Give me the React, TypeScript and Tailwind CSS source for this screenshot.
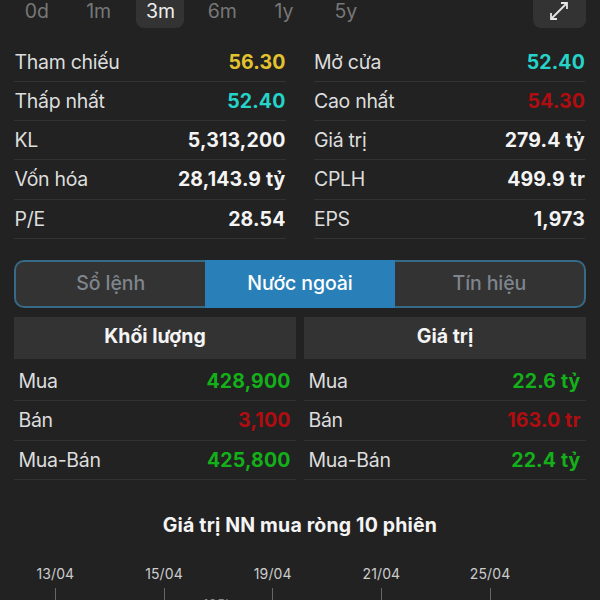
import React from 'react';

type Tone = 'plain' | 'ref' | 'floor' | 'up' | 'down';

interface Stat {
  label: string;
  value: string;
  tone?: Tone;
}

const TONES: Record<Tone, string> = {
  plain: 'text-[#f4f4f4]',
  ref: 'text-[#e3c22f]',
  floor: 'text-[#25d3c9]',
  up: 'text-[#13b01a]',
  down: 'text-[#b00d10]',
};

const RANGES = ['0d', '1m', '3m', '6m', '1y', '5y'];

const TABS = ['Sổ lệnh', 'Nước ngoài', 'Tín hiệu'];

const LEFT_STATS: Stat[] = [
  { label: 'Tham chiếu', value: '56.30', tone: 'ref' },
  { label: 'Thấp nhất', value: '52.40', tone: 'floor' },
  { label: 'KL', value: '5,313,200' },
  { label: 'Vốn hóa', value: '28,143.9 tỷ' },
  { label: 'P/E', value: '28.54' },
];

const RIGHT_STATS: Stat[] = [
  { label: 'Mở cửa', value: '52.40', tone: 'floor' },
  { label: 'Cao nhất', value: '54.30', tone: 'down' },
  { label: 'Giá trị', value: '279.4 tỷ' },
  { label: 'CPLH', value: '499.9 tr' },
  { label: 'EPS', value: '1,973' },
];

const VOLUME: Stat[] = [
  { label: 'Mua', value: '428,900', tone: 'up' },
  { label: 'Bán', value: '3,100', tone: 'down' },
  { label: 'Mua-Bán', value: '425,800', tone: 'up' },
];

const VALUE: Stat[] = [
  { label: 'Mua', value: '22.6 tỷ', tone: 'up' },
  { label: 'Bán', value: '163.0 tr', tone: 'down' },
  { label: 'Mua-Bán', value: '22.4 tỷ', tone: 'up' },
];

const DATES = ['13/04', '15/04', '19/04', '21/04', '25/04'];

const StatRow: React.FC<{ stat: Stat; inset?: boolean }> = ({ stat, inset }) => (
  <div
    className={`flex h-[39.25px] items-center justify-between border-b border-[#333333] pt-px ${
      inset ? 'pl-[4.5px] pr-[5.5px]' : 'pl-[0.5px]'
    }`}
  >
    <span className="text-[19.5px] tracking-[-0.3px] text-[#dddddd]">{stat.label}</span>
    <span className={`text-[19.5px] font-bold tracking-[0.15px] ${TONES[stat.tone ?? 'plain']}`}>{stat.value}</span>
  </div>
);

const ForeignTable: React.FC<{ title: string; rows: Stat[] }> = ({ title, rows }) => (
  <div className="flex-1">
    <div className="mb-[3px] flex h-[42px] items-center justify-center bg-[#333333] pb-[3px] text-[19.5px] font-bold text-[#f4f4f4]">
      {title}
    </div>
    {rows.map((row) => (
      <StatRow key={row.label} stat={row} inset />
    ))}
  </div>
);

const RangeBar: React.FC = () => (
  <div className="flex h-7 justify-between pl-[6px] pr-[14px]">
    <div className="flex">
      {RANGES.map((range) => (
        <div key={range} className="flex w-[61.8px] justify-center">
          <button
            className={`flex h-7 w-12 items-start justify-center rounded-b-lg text-[19.5px] leading-[22px] ${
              range === '3m' ? 'bg-[#333333] text-[#eeeeee]' : 'text-[#777777]'
            }`}
          >
            {range}
          </button>
        </div>
      ))}
    </div>
    <button className="flex h-7 w-[53px] justify-center rounded-b-lg bg-[#333333]">
      <svg width="20" height="20" viewBox="0 0 20 20" fill="none" stroke="#e6e6e6" strokeWidth="1.8" className="mr-px mt-[1px]">
        <path d="M2 18 18 2M12 2h6v6M2 12v6h6" />
      </svg>
    </button>
  </div>
);

const App: React.FC = () => {
  return (
    <div className="h-[600px] w-[600px] overflow-hidden bg-[#222222] font-['Inter',sans-serif]">
      <RangeBar />

      <div className="mt-[14.5px] grid grid-cols-2 gap-7 pl-[14px] pr-[15px]">
        <div>
          {LEFT_STATS.map((stat) => (
            <StatRow key={stat.label} stat={stat} />
          ))}
        </div>
        <div>
          {RIGHT_STATS.map((stat) => (
            <StatRow key={stat.label} stat={stat} />
          ))}
        </div>
      </div>

      <div className="mx-[14px] mt-[21.25px] flex h-12">
        {TABS.map((tab) => (
          <button
            key={tab}
            className={`flex-1 border-y-2 text-[19.5px] font-medium tracking-[-0.1px] first:rounded-l-[10px] first:border-l-2 last:rounded-r-[10px] last:border-r-2 ${
              tab === 'Nước ngoài'
                ? 'border-[#2980b9] bg-[#2980b9] text-white'
                : 'border-[#376a88] bg-[#333333] text-[#7f858c]'
            }`}
          >
            {tab}
          </button>
        ))}
      </div>

      <div className="mt-[9px] flex gap-2 px-[14px]">
        <ForeignTable title="Khối lượng" rows={VOLUME} />
        <ForeignTable title="Giá trị" rows={VALUE} />
      </div>

      <div className="mt-[31px] text-center text-[19.5px] font-bold leading-7 tracking-[0.18px] text-[#f4f4f4]">
        Giá trị NN mua ròng 10 phiên
      </div>

      {/* date axis, the chart runs on below the fold */}
      <div className="relative mt-[25px] flex pl-[1px]">
        {DATES.map((date) => (
          <div key={date} className="flex w-[108.7px] flex-col items-center">
            <span className="text-[14px] leading-5 tracking-[0.1px] text-[#cccccc]">{date}</span>
            <span className="mt-1 h-5 w-px bg-[#666666]" />
          </div>
        ))}
        <span className="absolute left-[203px] top-[32px] text-[13px] leading-4 tracking-[0.3px] text-[#888888]">105k</span>
      </div>
    </div>
  );
};

export default App;
